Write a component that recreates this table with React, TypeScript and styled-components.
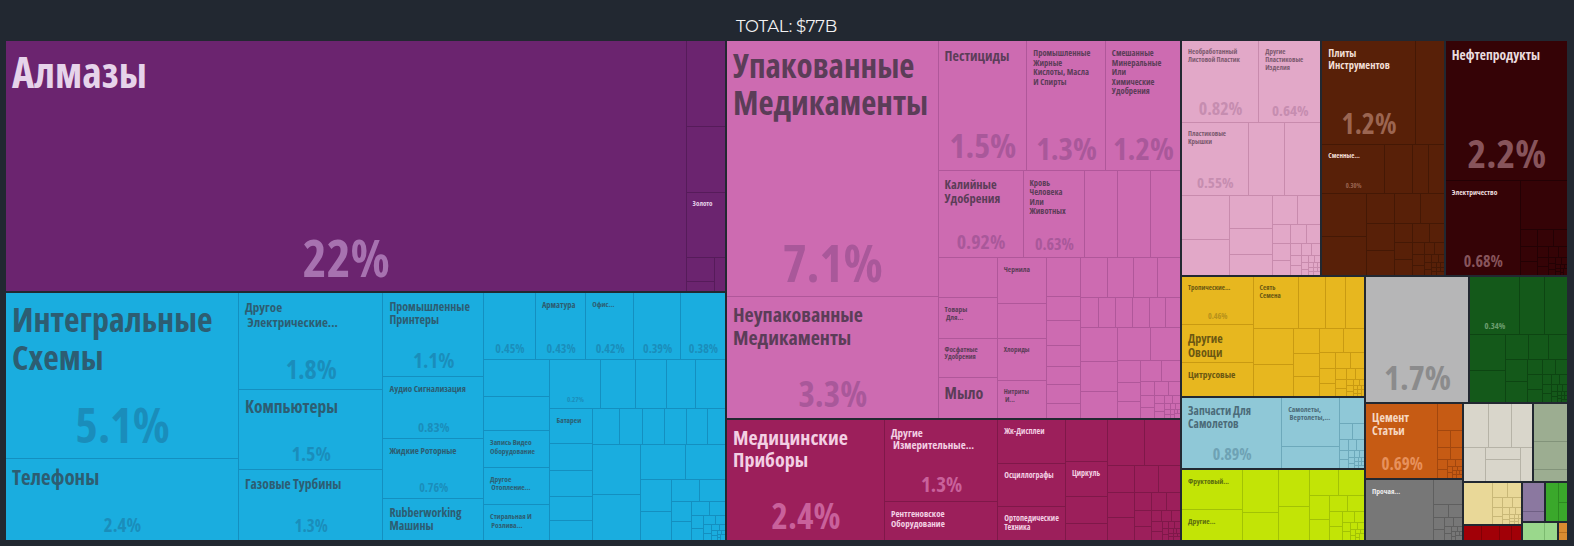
import React from 'react';
import styled, { createGlobalStyle } from 'styled-components';

const FONT = `"Open Sans", "Liberation Sans Narrow", "DejaVu Sans", sans-serif`;

const Global = createGlobalStyle`
  html, body { margin: 0; padding: 0; background: #222831; }
  * { box-sizing: border-box; }
`;

type Tone = { fill: string; line: string; text: string; pct: string };

type N = {
  f: number;
  d?: 'r' | 'c';
  k?: N[];
  t?: string;
  ts?: number;
  p?: string;
  ps?: number;
};

const L = (f: number, t?: string, ts?: number, p?: string, ps?: number): N => ({ f, t, ts, p, ps });
const R = (f: number, ...k: N[]): N => ({ f, d: 'r', k });
const C = (f: number, ...k: N[]): N => ({ f, d: 'c', k });

function M(f: number, w: number, h: number, depth = 0): N {
  if (w < 6 || h < 6 || depth > 12) return L(f);
  const cut = 0.36;
  if (w >= h) {
    const sw = Math.max(4, w * cut);
    const n = Math.max(1, Math.min(6, Math.round(h / sw)));
    const kids = Array.from({ length: n }, (_, i) => L(10 - i));
    return R(f, C(sw, ...kids), M(w - sw, w - sw, h, depth + 1));
  }
  const sh = Math.max(4, h * cut);
  const n = Math.max(1, Math.min(6, Math.round(w / sh)));
  const kids = Array.from({ length: n }, (_, i) => L(10 - i));
  return C(f, R(sh, ...kids), M(h - sh, w, h - sh, depth + 1));
}

/* ---------- data ---------- */

const T = {
  purple: { fill: '#6b246f', line: '#561b5a', text: '#e6d3ea', pct: '#a772b0' },
  blue: { fill: '#1aaddf', line: '#148fc0', text: '#2d5d72', pct: '#1a8dbb' },
  pink: { fill: '#cd6bb1', line: '#b0579a', text: '#5b3d58', pct: '#a9589a' },
  magenta: { fill: '#9c1f5b', line: '#7f1849', text: '#f3cfe3', pct: '#c9619b' },
  lpink: { fill: '#e2a8c8', line: '#c88bad', text: '#7b596e', pct: '#c68db0' },
  brown: { fill: '#582008', line: '#441805', text: '#f2ded5', pct: '#9b6551' },
  maroon: { fill: '#350306', line: '#230104', text: '#ebdcdf', pct: '#87545b' },
  yellow: { fill: '#e7b71f', line: '#c99a12', text: '#6b5712', pct: '#b8921a' },
  lblue: { fill: '#8fc8d7', line: '#6da9bb', text: '#4b6b79', pct: '#6ea2b4' },
  lime: { fill: '#c2e406', line: '#a2c205', text: '#5a6b10', pct: '#8fa810' },
  gray: { fill: '#b6b6b7', line: '#9a9a9b', text: '#777', pct: '#8b8b8c' },
  green: { fill: '#14591a', line: '#0d4512', text: '#d0e0d0', pct: '#6b9e6e' },
  orange: { fill: '#c65b14', line: '#a2470e', text: '#f6d8c2', pct: '#e7915c' },
  dgray: { fill: '#777777', line: '#5f5f5f', text: '#eeeeee', pct: '#aaaaaa' },
  beige: { fill: '#d9d6cb', line: '#b6b3a7', text: '#666', pct: '#999' },
  sage: { fill: '#9cad91', line: '#82937a', text: '#444', pct: '#777' },
  byellow: { fill: '#e9d898', line: '#c9b878', text: '#666', pct: '#999' },
  red: { fill: '#a10007', line: '#820005', text: '#fff', pct: '#f88' },
  lpurple: { fill: '#8b78a0', line: '#6f5f84', text: '#fff', pct: '#ccc' },
  gsmall: { fill: '#3aa82b', line: '#2c8a20', text: '#fff', pct: '#ccc' },
  lgreen: { fill: '#9ad88c', line: '#7cba70', text: '#333', pct: '#777' },
  osmall: { fill: '#d98b30', line: '#b87020', text: '#333', pct: '#777' },
} satisfies Record<string, Tone>;

const purple = R(1,
  L(679, 'Алмазы', 42, '22%', 51),
  C(39, L(89), L(68), L(59, 'Золото', 7), R(35, C(27, L(25), L(10)), L(10))),
);

const blue = R(1,
  C(233, L(168, 'Интегральные\nСхемы', 34, '5.1%', 48), L(79, 'Телефоны', 21, '2.4%', 19)),
  C(144,
    L(98, 'Другое\n Электрические...', 13, '1.8%', 26),
    L(80, 'Компьютеры', 17.5, '1.5%', 20),
    L(69, 'Газовые Турбины', 13.5, '1.3%', 17)),
  C(100,
    L(87, 'Промышленные\nПринтеры', 12, '1.1%', 21),
    L(62, 'Аудио Сигнализация', 9, '0.83%', 13),
    L(59, 'Жидкие Роторные', 9, '0.76%', 12),
    L(39, 'Rubberworking\nМашины', 12)),
  C(242,
    R(66,
      L(53, '', 0, '0.45%', 12),
      L(51, 'Арматура', 8.5, '0.43%', 12),
      L(48, 'Офис...', 7.5, '0.42%', 12),
      L(46, '', 0, '0.39%', 12),
      L(44, '', 0, '0.38%', 12)),
    R(181,
      C(66, L(42), L(38),
        L(33, 'Запись Видео\nОборудование', 7.5),
        L(34, 'Другое\n Отопление...', 7.5),
        L(32, 'Стиральная И\n Розлива...', 7.5)),
      C(176,
        R(48, L(42, '', 0, '0.27%', 7), L(38), L(33), L(31), L(32)),
        R(131,
          C(42, L(30, 'Батареи', 7.5), L(28), L(27), L(25), L(21)),
          C(134, R(35, L(28), L(23), L(22), L(22), L(21), L(18)), M(96, 134, 96)),
        ),
      ),
    ),
  ),
);

const pink = R(1,
  C(211,
    L(258, 'Упакованные\nМедикаменты', 33, '7.1%', 51),
    L(118, 'Неупакованные\nМедикаменты', 20, '3.3%', 35)),
  C(242,
    R(129,
      L(90, 'Пестициды', 14, '1.5%', 34),
      L(78, 'Промышленные\nЖирные\nКислоты, Масла\nИ Спирты', 8.5, '1.3%', 31),
      L(74, 'Смешанные\nМинеральные\nИли\nХимические\nУдобрения', 8.5, '1.2%', 31)),
    R(87,
      L(82, 'Калийные\nУдобрения', 12.5, '0.92%', 20),
      L(56, 'Кровь\nЧеловека\nИли\nЖивотных', 8.5, '0.63%', 16),
      L(36), L(35), L(33)),
    R(160,
      C(59, L(45), L(39, 'Товары\n Для...', 7.5), L(37, 'Фосфатные\nУдобрения', 7), L(39, 'Мыло', 16)),
      C(49, L(44, 'Чернила', 7.5), L(41), L(40, 'Хлориды', 7), L(35, 'Нитриты\n И...', 7)),
      C(34, L(39), L(24), L(25), L(20), L(18), L(18), L(15)),
      C(100,
        R(39, L(27), L(26), L(24), L(23)),
        R(30, L(18), L(17), L(17), L(17), L(16), L(15)),
        M(91, 100, 91)),
    ),
  ),
);

const magenta = R(1,
  L(151, 'Медицинские\nПриборы', 20, '2.4%', 35),
  C(116, L(84, 'Другие\n Измерительные...', 11, '1.3%', 21), L(36, 'Рентгеновское\nОборудование', 9)),
  C(69, L(45, 'Жк-Дисплеи', 8), L(43, 'Осциллографы', 8), L(32, 'Ортопедические\nТехника', 8)),
  C(43, L(45), L(29, 'Циркуль', 8), L(28), L(18)),
  C(74, R(45, L(37), L(37)), M(75, 74, 75)),
);

const lpink = C(1,
  R(82, L(78, 'Необработанный\nЛистовой Пластик', 7, '0.82%', 18), L(60, 'Другие\nПластиковые\nИзделия', 7, '0.64%', 15)),
  R(72, L(60, 'Пластиковые\nКрышки', 7, '0.55%', 15), L(39), L(39)),
  R(80, C(48, L(44), L(36)), C(42, L(33), L(26), L(21)), M(48, 48, 80)),
);

const brown = C(1,
  R(104, L(90, 'Плиты\nИнструментов', 10.5, '1.2%', 28), L(31)),
  R(48, L(57, 'Сменные...', 7, '0.30%', 6.5), L(31), L(17), L(16)),
  M(82, 121, 82),
);

const maroon = C(1,
  L(137, 'Нефтепродукты', 13.5, '2.2%', 40),
  R(97, L(70, 'Электричество', 7.5, '0.68%', 16), C(51, L(50), M(47, 51, 47))),
);

const yellow = R(1,
  C(71, L(50, 'Тропические...', 7, '0.46%', 8), L(37, 'Другие\nОвощи', 12), L(32, 'Цитрусовые', 9.5)),
  C(111, R(51, L(39, 'Сеять\nСемена', 7), L(29), L(22), L(21)), M(68, 111, 68)),
);

const lblue = R(1,
  L(95, 'Запчасти Для\nСамолетов', 11.5, '0.89%', 16),
  C(61, L(46, 'Самолеты,\n Вертолеты,...', 7.5), L(24)),
  M(26, 26, 70),
);

const lime = R(1,
  C(61, L(41, 'Фруктовый...', 7.5), L(29, 'Другие...', 7.5)),
  C(35, L(43), L(27)),
  M(86, 86, 70),
);

const gray = L(1, '', 0, '1.7%', 34);
const green = C(1, R(58, L(44, '', 0, '0.34%', 8.5), L(28), L(26)), M(67, 97, 67));
const orange = R(1, L(69, 'Цемент\nСтатьи', 12, '0.69%', 17), M(27, 27, 75));
const dgray = R(1, L(64, 'Прочая...', 7.5), C(32, L(25), M(36, 32, 36)));
const beige = C(1, R(45, L(25), L(22), L(21)), R(33, L(22), C(35, L(11), L(22)), L(11)));
const sage = C(1, L(39), L(28), L(11));
const byellow = R(1, L(28), M(29, 29, 43));
const red = R(1, L(18), L(18), L(12), L(9));
const lpurple = C(1, L(30), L(10));
const gsmall = R(1, L(12), C(9, L(20), L(20)));
const lgreen = R(1, L(22), L(13));
const osmall = C(1, L(9), L(8));

/* ---------- styles ---------- */

const Page = styled.div`
  width: 1574px;
  height: 546px;
  padding: 0 7px 0 6px;
  font-family: ${FONT};
  font-stretch: 75%;
`;

const Title = styled.div`
  height: 41px;
  padding-top: 16px;
  text-align: center;
  color: #f2f2f2;
  font-family: "Montserrat", "Inter", "Open Sans", sans-serif;
  font-stretch: 100%;
  font-size: 16.5px;
  line-height: 20px;
  letter-spacing: -0.2px;
`;

const Treemap = styled.div`
  height: 499px;
  display: flex;
  gap: 2px;
`;

const Stack = styled.div<{ $f: number; $dir: 'row' | 'column' }>`
  flex: ${(p) => p.$f} 1 0;
  min-width: 0;
  min-height: 0;
  display: flex;
  flex-direction: ${(p) => p.$dir};
  gap: 2px;
`;

const GroupBox = styled.div<{ $f: number; $line: string }>`
  flex: ${(p) => p.$f} 1 0;
  min-width: 0;
  min-height: 0;
  display: flex;
  background: ${(p) => p.$line};
  overflow: hidden;
`;

const Split = styled.div<{ $f: number; $dir: 'row' | 'column' }>`
  flex: ${(p) => p.$f} 1 0;
  min-width: 0;
  min-height: 0;
  display: flex;
  flex-direction: ${(p) => p.$dir};
  gap: 1px;
`;

const Tile = styled.div<{ $f: number; $fill: string; $pad: boolean }>`
  flex: ${(p) => p.$f} 1 0;
  min-width: 0;
  min-height: 0;
  overflow: hidden;
  background: ${(p) => p.$fill};
  display: flex;
  flex-direction: column;
  padding: ${(p) => (p.$pad ? '7px 5px 0 6px' : '0')};
`;

const Label = styled.div<{ $size: number; $color: string }>`
  font-size: ${(p) => p.$size}px;
  line-height: 1.12;
  font-weight: 700;
  color: ${(p) => p.$color};
  white-space: pre;
`;

const Pct = styled.div<{ $size: number; $color: string }>`
  margin-top: auto;
  align-self: center;
  font-size: ${(p) => p.$size}px;
  line-height: 1.1;
  font-weight: 700;
  color: ${(p) => p.$color};
  white-space: nowrap;
  margin-bottom: ${(p) => Math.max(4, Math.round(p.$size * 0.06 + 3))}px;
`;

/* ---------- rendering ---------- */

function NodeView({ n, tone }: { n: N; tone: Tone }) {
  if (n.k) {
    return (
      <Split $f={n.f} $dir={n.d === 'r' ? 'row' : 'column'}>
        {n.k.map((c, i) => (
          <NodeView key={i} n={c} tone={tone} />
        ))}
      </Split>
    );
  }
  const pad = Boolean(n.t || n.p);
  return (
    <Tile $f={n.f} $fill={tone.fill} $pad={pad}>
      {n.t ? (
        <Label $size={n.ts ?? 8} $color={tone.text}>
          {n.t}
        </Label>
      ) : null}
      {n.p ? (
        <Pct $size={n.ps ?? 10} $color={tone.pct}>
          {n.p}
        </Pct>
      ) : null}
    </Tile>
  );
}

function Group({ f, tone, tree }: { f: number; tone: Tone; tree: N }) {
  return (
    <GroupBox $f={f} $line={tone.line}>
      <NodeView n={{ ...tree, f: 1 }} tone={tone} />
    </GroupBox>
  );
}

export default function App() {
  return (
    <Page>
      <Global />
      <Title>TOTAL: $77B</Title>
      <Treemap>
        <Stack $f={719} $dir="column">
          <Group f={250} tone={T.purple} tree={purple} />
          <Group f={247} tone={T.blue} tree={blue} />
        </Stack>
        <Stack $f={453} $dir="column">
          <Group f={377} tone={T.pink} tree={pink} />
          <Group f={120} tone={T.magenta} tree={magenta} />
        </Stack>
        <Stack $f={385} $dir="column">
          <Stack $f={234} $dir="row">
            <Group f={138} tone={T.lpink} tree={lpink} />
            <Group f={121} tone={T.brown} tree={brown} />
            <Group f={121} tone={T.maroon} tree={maroon} />
          </Stack>
          <Stack $f={263} $dir="row">
            <Stack $f={182} $dir="column">
              <Group f={119} tone={T.yellow} tree={yellow} />
              <Group f={70} tone={T.lblue} tree={lblue} />
              <Group f={70} tone={T.lime} tree={lime} />
            </Stack>
            <Stack $f={201} $dir="column">
              <Stack $f={125} $dir="row">
                <Group f={102} tone={T.gray} tree={gray} />
                <Group f={97} tone={T.green} tree={green} />
              </Stack>
              <Stack $f={137} $dir="row">
                <Stack $f={96} $dir="column">
                  <Group f={75} tone={T.orange} tree={orange} />
                  <Group f={61} tone={T.dgray} tree={dgray} />
                </Stack>
                <Stack $f={103} $dir="column">
                  <Stack $f={78} $dir="row">
                    <Group f={68} tone={T.beige} tree={beige} />
                    <Group f={33} tone={T.sage} tree={sage} />
                  </Stack>
                  <Stack $f={58} $dir="row">
                    <Stack $f={57} $dir="column">
                      <Group f={43} tone={T.byellow} tree={byellow} />
                      <Group f={14} tone={T.red} tree={red} />
                    </Stack>
                    <Stack $f={44} $dir="column">
                      <Stack $f={40} $dir="row">
                        <Group f={22} tone={T.lpurple} tree={lpurple} />
                        <Group f={21} tone={T.gsmall} tree={gsmall} />
                      </Stack>
                      <Stack $f={17} $dir="row">
                        <Group f={35} tone={T.lgreen} tree={lgreen} />
                        <Group f={8} tone={T.osmall} tree={osmall} />
                      </Stack>
                    </Stack>
                  </Stack>
                </Stack>
              </Stack>
            </Stack>
          </Stack>
        </Stack>
      </Treemap>
    </Page>
  );
}
